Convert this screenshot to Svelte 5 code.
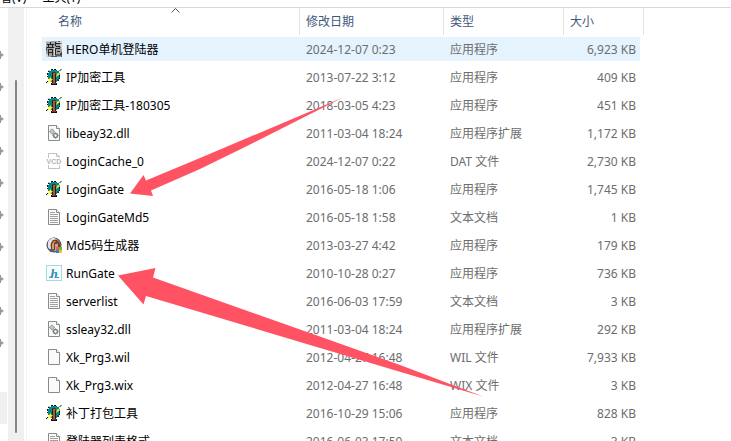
<script lang="ts">
  type Kind = 'hero' | 'gate' | 'dll' | 'vcd' | 'text' | 'md5' | 'run' | 'blank'

  interface FileRow {
    icon: Kind
    name: string
    date: string
    type: string
    size: string
  }

  const files: FileRow[] = [
    { icon: 'hero', name: 'HERO单机登陆器', date: '2024-12-07 0:23', type: '应用程序', size: '6,923 KB' },
    { icon: 'gate', name: 'IP加密工具', date: '2013-07-22 3:12', type: '应用程序', size: '409 KB' },
    { icon: 'gate', name: 'IP加密工具-180305', date: '2018-03-05 4:23', type: '应用程序', size: '451 KB' },
    { icon: 'dll', name: 'libeay32.dll', date: '2011-03-04 18:24', type: '应用程序扩展', size: '1,172 KB' },
    { icon: 'vcd', name: 'LoginCache_0', date: '2024-12-07 0:22', type: 'DAT 文件', size: '2,730 KB' },
    { icon: 'gate', name: 'LoginGate', date: '2016-05-18 1:06', type: '应用程序', size: '1,745 KB' },
    { icon: 'text', name: 'LoginGateMd5', date: '2016-05-18 1:58', type: '文本文档', size: '1 KB' },
    { icon: 'md5', name: 'Md5码生成器', date: '2013-03-27 4:42', type: '应用程序', size: '179 KB' },
    { icon: 'run', name: 'RunGate', date: '2010-10-28 0:27', type: '应用程序', size: '736 KB' },
    { icon: 'text', name: 'serverlist', date: '2016-06-03 17:59', type: '文本文档', size: '3 KB' },
    { icon: 'dll', name: 'ssleay32.dll', date: '2011-03-04 18:24', type: '应用程序扩展', size: '292 KB' },
    { icon: 'blank', name: 'Xk_Prg3.wil', date: '2012-04-27 16:48', type: 'WIL 文件', size: '7,933 KB' },
    { icon: 'blank', name: 'Xk_Prg3.wix', date: '2012-04-27 16:48', type: 'WIX 文件', size: '3 KB' },
    { icon: 'gate', name: '补丁打包工具', date: '2016-10-29 15:06', type: '应用程序', size: '828 KB' },
    { icon: 'text', name: '登陆器列表格式', date: '2016-06-03 17:59', type: '文本文档', size: '3 KB' },
  ]

  const pins = Array.from({ length: 10 }, (_, i) => i)

  let selected = $state(0)
</script>

{#snippet page()}
  <path d="M2.5 .5h8l3 3v12h-11z" fill="#fafafa" stroke="#8a8a86"/>
  <path d="M10.5 .5v3h3" fill="#fff" stroke="#8a8a86"/>
{/snippet}

{#snippet fileIcon(kind: Kind)}
  <svg class="icon" width="16" height="16" viewBox="0 0 16 16" aria-hidden="true">
    {#if kind === 'hero'}
      <rect width="16" height="16" fill="#a3a3a3"/>
      <path d="M0 0h5v1H0zM11 0h5v2h-5zM0 13h2v3H0zM8 7h1v9H8zM14 3h2v5h-2z" fill="#d2d2d2"/>
      <path d="M12 0h2v1h-2zM0 6h1v4H0zM5 15h6v1H5zM15 11h1v5h-1z" fill="#5a5a5a"/>
      <path d="M4.500 1v2M1 3.500h7M2.500 4v2M6.500 4v2M1 6.500h7M2.500 8.500v6M2.500 8.500h4v6M3 11.500h4" fill="none" stroke="#222"/>
      <path d="M9.500 1v4M9.500 2.500h5M10 5.500h4v2h-4.500v6.500h5.500v-2M11 10.500h3" fill="none" stroke="#222"/>
    {:else if kind === 'gate'}
      <path d="M5 1h6v1h2v2h1v6h-1v2h-2v1H5v-1H3v-2H2V4h1V2h2z" fill="#0a8583"/>
      <path d="M5 .500h5M2.500 3v-1h2M13.500 6v4M12.500 10.500v1h-2M1.500 4v4M3.500 11v1h2" fill="none" stroke="#041b1b" stroke-dasharray="2 1"/>
      <path d="M6 4h1v10H6zM9 5h1v9H9z" fill="#2a1d14"/>
      <path d="M7 4h2v10H7z" fill="#98603c"/>
      <path d="M6 3h4v1H6z" fill="#50351c"/>
      <path d="M5 14h1v2H5zM10 14h1v2h-1zM6 15h4v1H6z" fill="#111"/>
      <path d="M6 14h4v1H6z" fill="#b5271b"/>
      <path d="M16 1l-3 4h1l-4 3 1-3h-1l3-1zM0 15l3-4H2l3-3v2h2l-3 3H3z" fill="#fbf52a"/>
      <path d="M15.500 0l-2 2M0 14l2-2" stroke="#111"/>
    {:else if kind === 'dll'}
      {@render page()}
      <circle cx="6" cy="6.500" r="2" fill="#c6ccd0" stroke="#98a1a8"/>
      <path d="M6 3.500v1M6 8.500v1M3 6.500h1M8 6.500h1" stroke="#98a1a8"/>
      <circle cx="9.500" cy="10.500" r="2" fill="#fff" stroke="#75828b" stroke-width="1.500"/>
      <path d="M9.500 7.500v1M9.500 12.500v1M6.500 10.500h1M11.500 10.500h1" stroke="#75828b"/>
    {:else if kind === 'vcd'}
      <path d="M2.500 5V.500h8l3 3V5M10.500 .500v3h3M2.500 12v3.500h11V12" fill="none" stroke="#c3c3c3"/>
      <rect x="0" y="5" width="16" height="7" fill="#fff"/>
      <text class="vcd" x="8" y="11" text-anchor="middle">VCD</text>
    {:else if kind === 'text'}
      {@render page()}
      <path d="M4 3.500h5M4 5.500h8M4 7.500h8M4 9.500h8M4 11.500h8M4 13.500h8" stroke="#a0a0a0"/>
    {:else if kind === 'md5'}
      <circle cx="8" cy="8" r="7" fill="#a8a8b0" stroke="#393947"/>
      <path d="M3 3l3-2h4L6 4 4 8l1 5-3-3V5z" fill="#e3e4ed"/>
      <path d="M5 13V6l2-3h4l3 3v7h-3V7H9v6z" fill="#7d3a22"/>
      <path d="M6 12V7l2-3h2L8 6v6zM11 6l1 1v5h-1z" fill="#df9a66"/>
      <path d="M3 12h5v3H4z" fill="#555b83"/>
      <path d="M10 10h3v3h-3z" fill="#e7632d"/>
      <path d="M13 10h3v3h-3z" fill="#6eb640"/>
      <path d="M10 13h3v3h-3z" fill="#3a79cb"/>
      <path d="M13 13h3v3h-3z" fill="#f2be35"/>
    {:else if kind === 'run'}
      <rect x=".5" y=".5" width="15" height="15" fill="#f8fdfe" stroke="#a9d8e5"/>
      <text class="run" x="8" y="13" text-anchor="middle">h</text>
      <path d="M3 12.500q2 0 4-3M11 12.500h2" fill="none" stroke="#268fb3"/>
    {:else}
      {@render page()}
    {/if}
  </svg>
{/snippet}

<div class="explorer">
  <nav class="menu">
    <a href="#view">查看(V)</a>
    <a href="#tools">工具(T)</a>
  </nav>

  <div class="body">
    <aside class="tree">
      <div class="pins">
        {#each pins as pin (pin)}
          <svg width="4" height="8" viewBox="0 0 4 8" aria-hidden="true">
            <path d="M0 0h1v2l3 2-3 2v2H0z" fill="#8c9ba5"/>
          </svg>
        {/each}
      </div>
      <div class="current"></div>
    </aside>
    <div class="scrollbar"><div class="thumb"></div></div>

    <main>
      <table>
        <thead>
          <tr>
            <th class="name">
              名称
              <svg class="sort" width="9" height="5" viewBox="0 0 9 5" aria-hidden="true">
                <path d="M.500 4.500l4-4 4 4" fill="none" stroke="#555"/>
              </svg>
            </th>
            <th class="date">修改日期</th>
            <th class="type">类型</th>
            <th class="size">大小</th>
          </tr>
        </thead>
        <tbody>
          {#each files as file, i}
            <tr class:selected={selected === i} onclick={() => (selected = i)}>
              <td>
                <div class="file">
                  {@render fileIcon(file.icon)}
                  <span>{file.name}</span>
                </div>
              </td>
              <td>{file.date}</td>
              <td>{file.type}</td>
              <td class="num">{file.size}</td>
            </tr>
          {/each}
        </tbody>
      </table>
    </main>
  </div>

  <svg class="marks" width="500" height="410" viewBox="0 0 500 410" aria-hidden="true">
    <path d="M130 193.500L143.500 175 146 180.500 200 158 343 97.500 243 148 200 169 151 190.500 153 196z"/>
    <path d="M118 275.500L155.500 268 153 277.500 310 333 400 365 483 396.500 310 345 146 296 143.500 304.500z"/>
  </svg>
</div>

<style>
  :global(body) {
    margin: 0;
    background: #fff;
  }
  .explorer {
    position: relative;
    display: flex;
    flex-direction: column;
    height: 100vh;
    overflow: hidden;
    font-family: "Noto Sans", "Noto Sans CJK SC", sans-serif;
    font-size: 12px;
    line-height: 20px;
    color: #000;
  }
  .menu {
    display: flex;
    align-items: flex-end;
    gap: 16px;
    height: 7px;
    flex-shrink: 0;
    overflow: hidden;
    border-bottom: 1px solid #d9d9d9;
  }
  .menu a {
    color: #000;
    text-decoration: none;
    white-space: nowrap;
    line-height: 18px;
  }
  .menu a:first-child { margin-left: -12px; }
  .body {
    display: flex;
    flex: 1;
    min-height: 0;
  }
  .tree {
    width: 8px;
    flex-shrink: 0;
    overflow: hidden;
  }
  .pins {
    display: flex;
    flex-direction: column;
    gap: 24px;
    padding-top: 43px;
  }
  .pins svg { display: block; }
  .current {
    width: 7px;
    height: 32px;
    margin-top: 45px;
    background: #f0f0f0;
  }
  .scrollbar {
    width: 16px;
    flex-shrink: 0;
    box-sizing: border-box;
    padding: 72px 0 8px;
    display: flex;
    justify-content: center;
    background: #f0f0f0;
  }
  .thumb {
    width: 2px;
    border-radius: 1px;
    background: #858585;
  }
  main {
    flex: 1;
    min-width: 0;
    margin-left: 2px;
    padding-left: 15px;
    border-left: 1px solid #f3f3f3;
    overflow: hidden;
  }
  table {
    border-collapse: separate;
    border-spacing: 0;
    table-layout: fixed;
    width: 602px;
  }
  th {
    position: relative;
    height: 27px;
    box-sizing: border-box;
    padding: 0 6px;
    border-right: 1px solid #e2e2e2;
    text-align: left;
    font-weight: 400;
    color: #43587a;
  }
  .name {
    width: 258px;
    padding-left: 16px;
  }
  .date { width: 144px; }
  .type { width: 120px; }
  .size { width: 80px; }
  .sort {
    position: absolute;
    top: 0;
    left: 50%;
  }
  td {
    height: 28px;
    box-sizing: border-box;
    padding: 2px 6px 0;
    border: 0 solid transparent;
    border-width: 2px 0;
    background-clip: padding-box;
    color: #6d6d6d;
    white-space: nowrap;
    cursor: default;
  }
  td:first-child {
    padding-left: 4px;
    color: #000;
  }
  td:last-child {
    padding-right: 4px;
    border-right-width: 4px;
  }
  .selected td { background-color: #e5f3ff; }
  .num { text-align: right; }
  .file {
    display: flex;
    align-items: center;
    gap: 4px;
  }
  .icon {
    flex-shrink: 0;
    margin-bottom: 2px;
  }
  .vcd {
    font: 700 7px "Liberation Sans", sans-serif;
    fill: #b5b5b5;
  }
  .run {
    font: italic 700 13px "Liberation Serif", serif;
    fill: #268fb3;
  }
  .marks {
    position: absolute;
    top: 0;
    left: 0;
    fill: #ff5263;
    pointer-events: none;
  }
</style>
